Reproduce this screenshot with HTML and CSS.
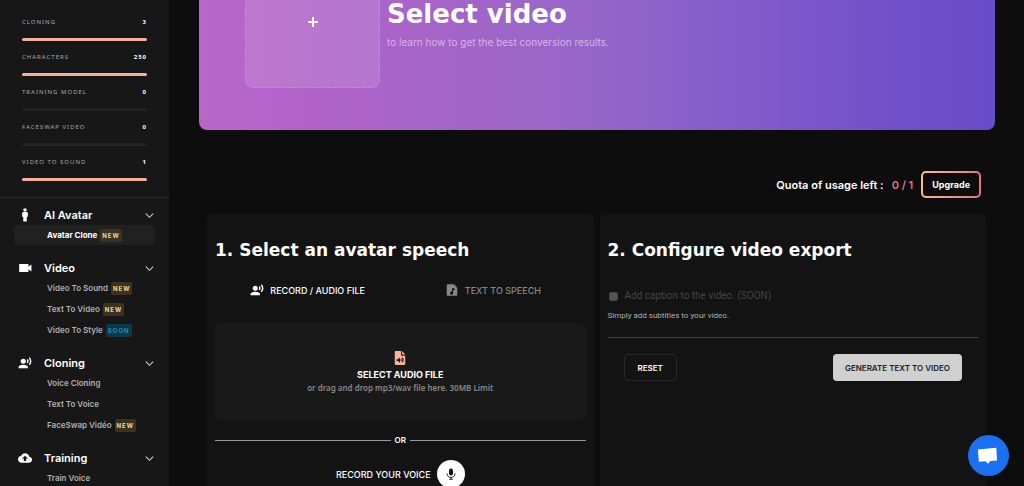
FILE: index.html
```html
<!DOCTYPE html>
<html lang="en">
<head>
<meta charset="utf-8">
<title>Avatar Clone</title>
<link rel="stylesheet" href="styles.css">
</head>
<body>
<svg class="sprite" aria-hidden="true">
  <symbol id="voice" viewBox="0 0 24 24"><circle cx="9" cy="9" r="4.3"/><path d="M9 15c-2.7 0-8 1.300-8 4v2h16v-2c0-2.700-5.300-4-8-4z"/><path d="M16.700 5.300l-1.700 1.700c.9 1.200.9 2.800 0 4l1.700 1.700c2-2 2-5.200 0-7.400zM20.100 2l-1.700 1.700c2.800 3 2.800 7.600 0 10.600l1.700 1.700c3.900-3.900 3.900-9.900 0-14z"/></symbol>
  <symbol id="man" viewBox="0 0 24 24"><circle cx="12" cy="3.500" r="3"/><path d="M14.500 7h-5C8 7 7 8 7 9.500V15h2v8h6v-8h2V9.500C17 8 16 7 14.500 7z"/></symbol>
  <symbol id="camera" viewBox="0 0 24 24"><path d="M18 10V6c0-.6-.4-1-1-1H3c-.6 0-1 .4-1 1v12c0 .6.400 1 1 1h14c.6 0 1-.4 1-1v-4l5 4V6z"/></symbol>
  <symbol id="cloud" viewBox="0 0 24 24"><path d="M19.400 10C18.700 6.600 15.600 4 12 4 9.100 4 6.600 5.600 5.400 8 2.300 8.400 0 10.900 0 14c0 3.300 2.700 6 6 6h13c2.800 0 5-2.200 5-5 0-2.600-2.100-4.800-4.600-5zM14 13v4h-4v-4H7l5-5 5 5z"/></symbol>
  <symbol id="chevron" viewBox="0 0 24 24"><path d="M4 8l8 8 8-8" fill="none" stroke="currentColor" stroke-width="2.400"/></symbol>
  <symbol id="mic" viewBox="0 0 24 24"><rect x="8" y="1" width="8" height="14" rx="4"/><path d="M4 11c0 4.500 3.500 8 8 8s8-3.500 8-8M12 19v4M8.500 22.500h7" fill="none" stroke="currentColor" stroke-width="1.800"/></symbol>
  <symbol id="music" viewBox="0 0 24 24"><path fill-rule="evenodd" d="M14 2H5c-1.100 0-2 .9-2 2v16c0 1.100.9 2 2 2h14c1.100 0 2-.9 2-2V9zM17 12h-3v5.500a2.700 2.700 0 1 1-2-2.600V9h2l3 1z"/><path d="M15 1l7 7h-7z" opacity=".6"/></symbol>
  <symbol id="audio" viewBox="0 0 24 24"><path fill-rule="evenodd" d="M14 0H5c-1.400 0-2 .9-2 2v20c0 1.300.8 2 2 2h14c1.300 0 2-.8 2-2V8h-7zM6 14h2.500l3.500-3v9l-3.500-3H6z"/><path d="M15.500 0L21 6h-5.500z"/><path d="M13.500 13.500q1.700 2 0 4M15.500 11.500q4 4 0 8" fill="none" stroke="#181818" stroke-width="1.800"/></symbol>
</svg>
<div class="app">
  <aside class="sidebar">
    <ul class="usage">
      <li><div class="usage-row"><span>CLONING</span><b>3</b></div><div class="bar full"></div></li>
      <li><div class="usage-row"><span>CHARACTERS</span><b>250</b></div><div class="bar full"></div></li>
      <li><div class="usage-row"><span>TRAINING MODEL</span><b>0</b></div><div class="bar"></div></li>
      <li><div class="usage-row"><span>FACESWAP VIDEO</span><b>0</b></div><div class="bar"></div></li>
      <li><div class="usage-row"><span>VIDEO TO SOUND</span><b>1</b></div><div class="bar full"></div></li>
    </ul>
    <nav class="nav">
      <section class="group">
        <button class="group-head" type="button"><svg class="icon"><use href="#man"/></svg><span>AI Avatar</span><svg class="chev"><use href="#chevron"/></svg></button>
        <a class="item active" href="#">Avatar Clone <span class="tag">NEW</span></a>
      </section>
      <section class="group">
        <button class="group-head" type="button"><svg class="icon"><use href="#camera"/></svg><span>Video</span><svg class="chev"><use href="#chevron"/></svg></button>
        <a class="item" href="#">Video To Sound <span class="tag">NEW</span></a>
        <a class="item" href="#">Text To Video <span class="tag">NEW</span></a>
        <a class="item" href="#">Video To Style <span class="tag soon">SOON</span></a>
      </section>
      <section class="group">
        <button class="group-head" type="button"><svg class="icon"><use href="#voice"/></svg><span>Cloning</span><svg class="chev"><use href="#chevron"/></svg></button>
        <a class="item" href="#">Voice Cloning</a>
        <a class="item" href="#">Text To Voice</a>
        <a class="item" href="#">FaceSwap Vidéo <span class="tag">NEW</span></a>
      </section>
      <section class="group">
        <button class="group-head" type="button"><svg class="icon"><use href="#cloud"/></svg><span>Training</span><svg class="chev"><use href="#chevron"/></svg></button>
        <a class="item" href="#">Train Voice</a>
      </section>
    </nav>
  </aside>
  <main class="main">
    <section class="banner">
      <button class="picker" type="button" aria-label="Select video"><svg viewBox="0 0 12 12"><path d="M6 1v10M1 6h10"/></svg></button>
      <div class="banner-text">
        <h1>Select video</h1>
        <p>to learn how to get the best conversion results.</p>
      </div>
    </section>
    <div class="quota">
      <span>Quota of usage left :</span><span class="count">0 / 1</span>
      <button class="upgrade" type="button">Upgrade</button>
    </div>
    <div class="cards">
      <section class="card">
        <h2>1. Select an avatar speech</h2>
        <div class="tabs">
          <button class="tab selected" type="button"><svg><use href="#voice"/></svg>RECORD / AUDIO FILE</button>
          <button class="tab" type="button"><svg><use href="#music"/></svg>TEXT TO SPEECH</button>
        </div>
        <button class="drop" type="button">
          <svg><use href="#audio"/></svg>
          <strong>SELECT AUDIO FILE</strong>
          <span>or drag and drop mp3/wav file here. 30MB Limit</span>
        </button>
        <div class="or">OR</div>
        <div class="record"><label for="record">RECORD YOUR VOICE</label><button id="record" class="mic" type="button"><svg><use href="#mic"/></svg></button></div>
      </section>
      <section class="card">
        <h2>2. Configure video export</h2>
        <div class="caption"><input id="caption" type="checkbox" disabled><label for="caption">Add caption to the video. (SOON)</label></div>
        <p class="hint">Simply add subtitles to your video.</p>
        <hr>
        <div class="actions">
          <button class="reset" type="button">RESET</button>
          <button class="generate" type="button">GENERATE TEXT TO VIDEO</button>
        </div>
      </section>
    </div>
  </main>
</div>
<button class="chat" type="button" aria-label="Open chat"><svg viewBox="0 0 25 25"><path d="M1 6l20-2 .8 14-7.300.4-2.500 3-3-2.600-7 .6z"/></svg></button>
</body>
</html>
```
FILE: styles.css
```css
* { box-sizing: border-box; }
body { margin: 0; background: #0d0d0d; color: #fff; font-family: Inter, sans-serif; font-size: 11px; }
button { margin: 0; padding: 0; border: 0; background: none; color: inherit; font: inherit; cursor: pointer; }
h1, h2, p, ul { margin: 0; padding: 0; }
svg { fill: currentColor; flex: none; }
.sprite { display: none; }
.app { display: flex; height: 100vh; overflow: hidden; }

.sidebar { flex: 0 0 169px; background: #171717; overflow: hidden; }
.usage { display: grid; gap: 10px; padding: 16px 22px; border-bottom: 1px solid #292929; list-style: none; }
.usage li { display: grid; gap: 10px; }
.usage-row { display: flex; justify-content: space-between; font: 6px/12px "Noto Sans", sans-serif; letter-spacing: 1px; color: #aaa; }
.usage-row b { color: #fff; }
.bar { height: 3px; border-radius: 2px; background: #222; }
.bar.full { background: #f3b09b; }
.nav { display: grid; gap: 13px; padding: 7px 14px; }
.group { display: grid; }
.group-head { display: flex; align-items: center; height: 20px; font-size: 11px; font-weight: 600; text-align: left; }
.group-head span { flex: 1; padding-left: 12px; }
.icon { width: 14px; height: 14px; margin-left: 4px; }
.chev { width: 11px; height: 11px; color: #ccc; }
.item { display: flex; align-items: center; gap: 3px; height: 20px; padding-left: 33px; border-radius: 5px; color: #b0b0b0; font-size: 8px; font-weight: 600; text-decoration: none; }
.item + .item { margin-top: 1px; }
.item.active { background: #212121; color: #fff; font-weight: 700; }
.tag { padding: 0 2px; border-radius: 2px; background: #3b321f; color: #f2d99a; font-size: 6px; line-height: 13px; font-weight: 700; letter-spacing: 1px; }
.tag.soon { background: #0c3945; color: #1590b4; }

.main { flex: 1; min-width: 0; padding: 0 29px 0 30px; }
.banner { display: flex; gap: 7px; padding: 0 46px 42px; border-radius: 0 0 8px 8px; background: linear-gradient(90deg, #b866c8 0%, #b163c8 15%, #9566c9 50%, #6d4dca 92%, #694cc9 100%); }
.picker { display: grid; place-items: center; flex: 0 0 135px; height: 88px; padding-bottom: 44px; border: 1px dashed #ca88d6; border-top: 0; border-radius: 0 0 8px 8px; background: #ffffff1f; }
.picker svg { width: 12px; height: 12px; stroke: #fff; stroke-width: 2; }
.banner-text h1 { font: bold 26px/28px "DejaVu Sans", sans-serif; }
.banner-text p { padding-top: 6px; color: #d5b5e5; font-size: 10px; line-height: 16px; }
.quota { display: flex; justify-content: flex-end; align-items: center; gap: 8px; padding: 41px 14px 16px; font-size: 11px; font-weight: 600; }
.count { color: #df7484; }
.upgrade { height: 27px; padding: 0 9px; border: 2px solid transparent; border-radius: 5px; background: linear-gradient(#0d0d0d, #0d0d0d) padding-box, linear-gradient(100deg, #f8c19c, #df7083) border-box; font-size: 9px; font-weight: 700; }
.cards { display: grid; grid-template-columns: 1fr 1fr; gap: 6px; padding: 0 9px 0 8px; }
.card { min-height: 300px; padding: 24px 8px; border-radius: 5px; background: #131313; }
.card h2 { font: bold 17px/24px "DejaVu Sans", sans-serif; white-space: nowrap; }
.tabs { display: grid; grid-template-columns: 1fr 1fr; padding: 18px 0 23px; }
.tab { display: flex; justify-content: center; align-items: center; gap: 6px; height: 20px; color: #888; font-size: 9px; font-weight: 500; }
.tab.selected { color: #fff; }
.tab svg { width: 14px; height: 14px; }
.drop { display: flex; flex-direction: column; align-items: center; justify-content: center; width: 100%; height: 97px; padding-top: 2px; border-radius: 6px; background: #191919; }
.drop svg { width: 14px; height: 14px; color: #f6b39d; }
.drop strong { padding-top: 4px; font-size: 9px; line-height: 12px; }
.drop span { color: #888; font: 600 8px/14px "Noto Sans", sans-serif; }
.or { display: flex; align-items: center; gap: 4px; padding: 13px 0; font-size: 8px; font-weight: 600; line-height: 14px; }
.or::before, .or::after { content: ""; flex: 1; height: 1px; background: #999; }
.record { display: flex; justify-content: center; align-items: center; gap: 6px; font-size: 9px; font-weight: 500; }
.mic { display: grid; place-items: center; width: 28px; height: 28px; border-radius: 50%; background: #fff; color: #111; }
.mic svg { width: 12px; height: 12px; }
.caption { display: flex; align-items: center; gap: 7px; padding: 25px 0 0 1px; color: #444; font: 10px/18px Roboto, sans-serif; }
.caption input { appearance: none; width: 9px; height: 9px; margin: 0; border: 1px solid #444; border-radius: 2px; background: #555; }
.hint { padding-top: 4px; color: #b0b0b0; font: 8px/14px Roboto, sans-serif; }
hr { height: 1px; margin: 14px 0 16px; border: 0; background: #444; }
.actions { display: flex; justify-content: space-between; padding: 0 16px; }
.reset, .generate { height: 27px; border-radius: 4px; font-size: 8px; font-weight: 600; }
.reset { padding: 0 13px; border: 1px solid #292929; }
.generate { padding: 0 12px; background: #d0d0d0; color: #222; }
.chat { position: fixed; right: 15px; bottom: 10px; display: grid; place-items: center; width: 41px; height: 41px; border-radius: 50%; background: #1b70f0; }
.chat svg { width: 23px; height: 23px; }
```
